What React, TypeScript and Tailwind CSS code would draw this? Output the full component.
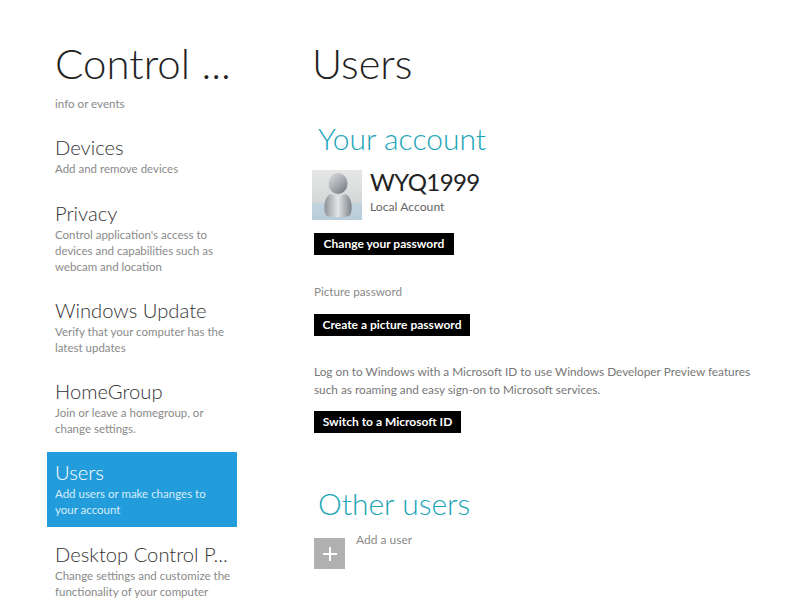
import React from "react";

const items = [
  { t: "Devices", d: ["Add and remove devices"], cls: "h-[66px] pt-[8px]" },
  { t: "Privacy", d: ["Control application's access to", "devices and capabilities such as", "webcam and location"], cls: "h-[97px] pt-[8px]" },
  { t: "Windows Update", d: ["Verify that your computer has the", "latest updates"], cls: "h-[81px] pt-[8px]" },
  { t: "HomeGroup", d: ["Join or leave a homegroup, or", "change settings."], cls: "h-[83px] pt-[8px]" },
  { t: "Users", d: ["Add users or make changes to", "your account"], cls: "h-[75px] pt-[6px] mb-[5px] bg-[#229cdb]", active: true },
  { t: "Desktop Control P...", d: ["Change settings and customize the", "functionality of your computer"], cls: "h-[81px] pt-[8px]" },
];

function Btn({ children, w }: { children: React.ReactNode; w: string }) {
  return (
    <div className={`bg-black text-white text-[12px] font-bold h-[22px] leading-[22px] text-center ${w}`}>{children}</div>
  );
}

export default function App() {
  const font = { fontFamily: '"Lato","Open Sans",sans-serif' };
  return (
    <div className="w-[800px] h-[600px] overflow-hidden bg-white flex" style={font}>
      <div className="w-[47px] shrink-0" />
      <div className="w-[190px] shrink-0 flex flex-col">
        <h1 className="text-[42px] leading-[56px] font-light text-[#222] mt-[35px] pl-2 whitespace-nowrap shrink-0">Control ...</h1>
        <div className="h-[13px] shrink-0 overflow-hidden mt-[8px] pl-2 text-[11.6px] leading-[9px] text-[#8a8a8a]">info or events</div>
        <div className="mt-[13px] flex flex-col">
          {items.map((it) => (
            <div key={it.t} className={`pl-2 shrink-0 ${it.cls}`}>
              <div className={`text-[20.2px] leading-[28px] font-light whitespace-nowrap ${it.active ? "text-white" : "text-[#333]"}`}>{it.t}</div>
              {it.d.map((l) => (
                <div key={l} className={`text-[11.5px] leading-[16px] whitespace-nowrap ${it.active ? "text-[#d8eefa]" : "text-[#8a8a8a]"}`}>{l}</div>
              ))}
            </div>
          ))}
        </div>
      </div>
      <div className="flex-1 pl-[77px] flex flex-col">
        <h1 className="text-[41.5px] leading-[56px] font-light text-[#222] mt-[35px] -ml-[2px]">Users</h1>
        <h2 className="text-[30px] leading-[40px] font-light text-[#1ba5b8] mt-[27px] ml-[4px] whitespace-nowrap">Your account</h2>
        <div className="flex mt-[12px] -ml-[2px]">
          <div className="w-[50px] h-[50px] bg-[linear-gradient(to_bottom,#e6e6e6_0%,#d6d8d8_62%,#c2d3de_68%,#b8ccda_100%)]">
            <svg viewBox="0 0 50 50" className="w-[50px] h-[50px]">
              <defs>
                <linearGradient id="p" x1="0.1" x2="0.9" y1="0" y2="1">
                  <stop offset="0" stopColor="#d8dbde" />
                  <stop offset="0.5" stopColor="#a9adb2" />
                  <stop offset="1" stopColor="#6f757b" />
                </linearGradient>
                <linearGradient id="q" x1="0" x2="1" y1="0" y2="0">
                  <stop offset="0" stopColor="#8e9398" />
                  <stop offset="0.5" stopColor="#e4e6e8" />
                  <stop offset="1" stopColor="#7c8288" />
                </linearGradient>
              </defs>
              <ellipse cx="26" cy="13.5" rx="9.5" ry="10.5" fill="url(#p)" />
              <path d="M15 46c-2-1-3-6-2.500-11 .5-6 3-10 6.500-11 4 2.500 10 2.500 14 0 3.500 1 6 5 6.500 11 .5 5-.5 10-2.500 11-5 1.500-17 1.500-22 0z" fill="url(#q)" />
            </svg>
          </div>
          <div className="ml-[8px]">
            <div className="text-[24px] leading-[24px] text-[#222] tracking-[-0.6px]">WYQ1999</div>
            <div className="text-[12.2px] leading-[16px] mt-[5px] text-[#666]">Local Account</div>
          </div>
        </div>
        <div className="mt-[13px]"><Btn w="w-[140px]">Change your password</Btn></div>
        <div className="text-[11.7px] leading-[16px] text-[#8a8a8a] mt-[28px]">Picture password</div>
        <div className="mt-[15px]"><Btn w="w-[156px]">Create a picture password</Btn></div>
        <div className="text-[11.8px] leading-[18px] text-[#777] mt-[27px] whitespace-nowrap">
          <div>Log on to Windows with a Microsoft ID to use Windows Developer Preview features</div>
          <div>such as roaming and easy sign-on to Microsoft services.</div>
        </div>
        <div className="mt-[12px]"><Btn w="w-[147px]">Switch to a Microsoft ID</Btn></div>
        <h2 className="text-[30px] leading-[40px] font-light text-[#1ba5b8] mt-[50px] ml-[4px] whitespace-nowrap">Other users</h2>
        <div className="flex mt-[15px]">
          <div className="w-[31px] h-[31px] bg-[#b0b0b0] flex items-center justify-center">
            <svg viewBox="0 0 14 14" className="w-[14px] h-[14px]"><path d="M7 0v14M0 7h14" stroke="#fff" strokeWidth="2" /></svg>
          </div>
          <div className="ml-[11px] -mt-[6px] text-[12px] leading-[16px] text-[#8a8a8a]">Add a user</div>
        </div>
      </div>
    </div>
  );
}
